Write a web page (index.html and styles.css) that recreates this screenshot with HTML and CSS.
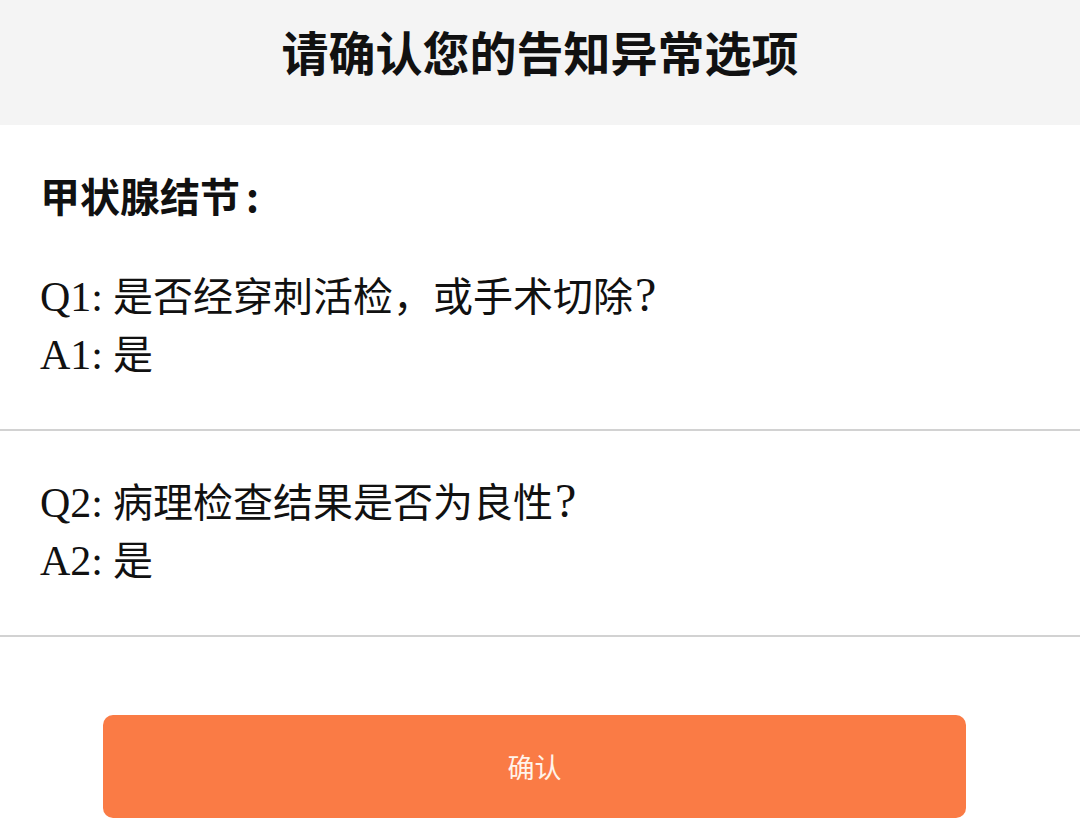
FILE: index.html
```html
<!DOCTYPE html>
<html lang="zh-CN">
<head>
  <meta charset="UTF-8">
  <title>请确认您的告知异常选项</title>
  <link rel="stylesheet" href="styles.css">
</head>
<body>
  <header class="top-bar">
    <h1>请确认您的告知异常选项</h1>
  </header>

  <section class="qa-group">
    <h2 class="group-title">甲状腺结节<span class="colon">:</span></h2>
    <p class="qa-line"><span class="tag">Q1:</span> 是否经穿刺活检，或手术切除<span class="qmark">?</span></p>
    <p class="qa-line"><span class="tag">A1:</span> 是</p>
  </section>

  <section class="qa-group">
    <p class="qa-line"><span class="tag">Q2:</span> 病理检查结果是否为良性<span class="qmark">?</span></p>
    <p class="qa-line"><span class="tag">A2:</span> 是</p>
  </section>

  <div class="actions">
    <button class="confirm-btn">确认</button>
  </div>
</body>
</html>
```

FILE: styles.css
```css
body {
  margin: 0;
  background: #fff;
  color: #111;
  font-family: "Noto Sans CJK SC", sans-serif;
}

.top-bar {
  height: 125px;
  background: #f4f4f4;
  display: flex;
  align-items: center;
  justify-content: center;
}

.top-bar h1 {
  margin: 0 0 24px;
  font-size: 47px;
  font-weight: 700;
}

.qa-group {
  padding: 44px 40px;
  border-bottom: 2px solid #d2d2d2;
}

.group-title {
  margin: 0 0 48px;
  font-size: 40px;
  font-weight: 700;
  line-height: 52px;
}

.group-title .colon {
  margin-left: 6px;
}

.qa-line {
  margin: 0;
  font-family: "Liberation Serif", "Noto Sans CJK SC", serif;
  font-size: 40px;
  line-height: 58px;
}

.qa-line .tag {
  font-size: 42px;
  line-height: 1;
}

.qa-line .qmark {
  font-size: 48px;
  line-height: 1;
  margin-left: 2px;
}

.actions {
  padding: 78px 0 0 103px;
}

.confirm-btn {
  width: 863px;
  height: 103px;
  border: none;
  border-radius: 10px;
  background: #fa7b45;
  color: #fff3ea;
  font-family: "Noto Sans CJK SC", sans-serif;
  font-size: 27px;
}
```
